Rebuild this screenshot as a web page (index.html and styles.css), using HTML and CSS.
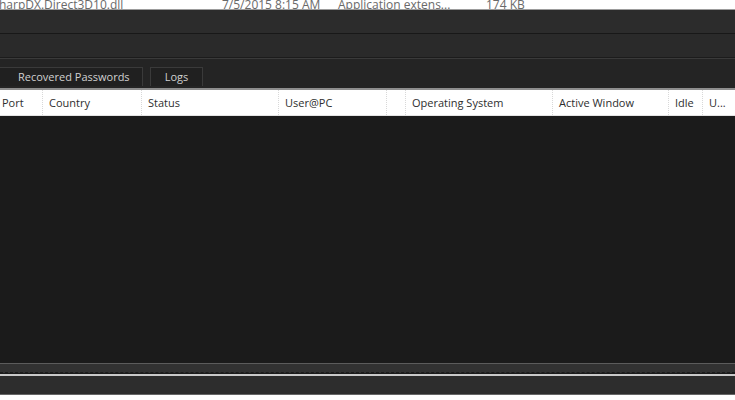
FILE: index.html
```html
<!DOCTYPE html>
<html>
<head>
<meta charset="utf-8">
<link rel="stylesheet" href="styles.css">
</head>
<body>
<div class="app">
  <div class="file-strip">
    <span class="f-name">harpDX.Direct3D10.dll</span>
    <span class="f-date">7/5/2015 8:15 AM</span>
    <span class="f-type">Application extens...</span>
    <span class="f-size">174 KB</span>
  </div>
  <div class="bar bar-one"></div>
  <div class="bar bar-two"></div>
  <div class="tabs">
    <div class="tab tab-wide">Recovered Passwords</div>
    <div class="tab tab-logs">Logs</div>
  </div>
  <div class="header">
    <div class="col c-port">Port</div>
    <div class="col c-country">Country</div>
    <div class="col c-status">Status</div>
    <div class="col c-user">User@PC</div>
    <div class="col c-blank"></div>
    <div class="col c-os">Operating System</div>
    <div class="col c-win">Active Window</div>
    <div class="col c-idle">Idle</div>
    <div class="col c-u">U...</div>
  </div>
  <div class="list"></div>
  <div class="footer">
    <div class="foot-band"></div>
    <div class="status-bar"></div>
    <div class="foot-white"></div>
  </div>
</div>
</body>
</html>
```
FILE: styles.css
```css
html, body {
  margin: 0;
  padding: 0;
  width: 735px;
  height: 400px;
  overflow: hidden;
  background: #1b1b1b;
}
.app {
  display: flex;
  flex-direction: column;
  width: 735px;
  height: 400px;
  font-family: "Open Sans", "Noto Sans", sans-serif;
}
.file-strip {
  height: 9px;
  background: #ffffff;
  border-bottom: 1px solid #9c9c9c;
  overflow: hidden;
  display: flex;
  align-items: flex-end;
  font-size: 12px;
  color: #6a6a6a;
  line-height: 14px;
  white-space: nowrap;
}
.file-strip span {
  margin-bottom: -3px;
}
.f-name { width: 223px; margin-left: -1px; }
.f-date { width: 116px; }
.f-type { width: 148px; }
.f-size { width: 60px; }
.bar {
  height: 23px;
}
.bar-one {
  background: #2c2c2c;
  border-bottom: 1px solid #181818;
}
.bar-two {
  background: #2a2a2a;
  border-bottom: 1px solid #1c1c1c;
}
.tabs {
  height: 32px;
  background: #242424;
  border-top: 1px solid #3a3a3a;
  display: flex;
  align-items: flex-end;
  gap: 7px;
  box-sizing: border-box;
  border-bottom: 2px solid #8e8e8e;
  padding-bottom: 2px;
}
.tab {
  height: 19px;
  background: #202020;
  border: 1px solid #3a3a3a;
  border-bottom: 0;
  color: #d0d0d0;
  font-size: 11px;
  line-height: 18px;
  box-sizing: border-box;
}
.tab-wide {
  width: 143px;
  padding-left: 18px;
  border-left: 0;
}
.tab-logs {
  width: 53px;
  text-align: center;
}
.header {
  height: 26px;
  background: #ffffff;
  display: flex;
  border-bottom: 1px solid #e4e4e4;
  box-sizing: border-box;
}
.col {
  font-size: 11px;
  color: #2e2e2e;
  line-height: 25px;
  padding-left: 6px;
  box-sizing: border-box;
  border-right: 1px dotted #d8d8d8;
  white-space: nowrap;
  overflow: hidden;
}
.c-port { width: 43px; padding-left: 2px; }
.c-country { width: 99px; }
.c-status { width: 137px; }
.c-user { width: 108px; }
.c-blank { width: 19px; }
.c-os { width: 147px; }
.c-win { width: 116px; }
.c-idle { width: 34px; }
.c-u { width: 32px; border-right: 0; }
.list {
  flex: 1;
  background: #1b1b1b;
}
.footer {
  display: flex;
  flex-direction: column;
}
.foot-band {
  height: 10px;
  background: #323232;
  border-top: 1px solid #5c5c5c;
  border-bottom: 1px dashed #1c1c1c;
  box-sizing: border-box;
}
.status-bar {
  height: 21px;
  background: #2d2d2d;
  border-top: 2px solid #c9c9c9;
  border-bottom: 1px solid #666666;
  box-sizing: border-box;
  margin-top: 1px;
}
.foot-white {
  height: 5px;
  background: #ffffff;
}
```
